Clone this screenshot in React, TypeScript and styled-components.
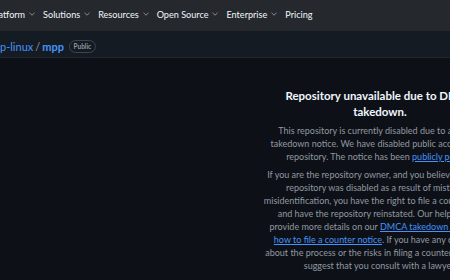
import React from "react";
import styled, { createGlobalStyle } from "styled-components";

const GlobalStyle = createGlobalStyle`
  html, body {
    margin: 0;
    padding: 0;
    background: #0d1117;
    overflow: hidden;
  }
  body {
    font-family: "Lato", "Liberation Sans", sans-serif;
  }
`;

const Page = styled.div`
  width: 760px;
  height: 280px;
  display: flex;
  flex-direction: column;
  background: #0d1117;
`;

const Header = styled.header`
  height: 31px;
  box-sizing: border-box;
  padding-bottom: 3px;
  background: #25292e;
  display: flex;
  align-items: center;
`;

const Nav = styled.nav`
  display: flex;
  align-items: center;
  gap: 8px;
  margin-left: -9px;
`;

const NavItem = styled.span`
  display: flex;
  align-items: center;
  gap: 4px;
  color: #f0f6fc;
  font-size: 9.1px;
  white-space: nowrap;
`;

const Chevron = () => (
  <svg width="6" height="4" viewBox="0 0 6 4" fill="none">
    <path d="M0.5 0.8 L3 3.2 L5.5 0.8" stroke="#9198a1" strokeWidth="0.9" />
  </svg>
);

const RepoBar = styled.div`
  height: 27px;
  box-sizing: border-box;
  padding-top: 5px;
  background: #151b23;
  border-bottom: 1px solid #21262d;
  display: flex;
  align-items: center;
  gap: 5px;
`;

const Crumbs = styled.div`
  display: flex;
  align-items: center;
  gap: 2px;
  font-size: 11px;
  color: #4493f8;
  white-space: nowrap;
`;

const Slash = styled.span`
  color: #9198a1;
`;

const RepoName = styled.span`
  font-weight: 700;
`;

const Badge = styled.span`
  border: 1px solid #3d444d;
  border-radius: 8px;
  color: #9198a1;
  font-size: 6.5px;
  font-weight: 700;
  padding: 1px 3.5px;
  line-height: 9px;
`;

const Main = styled.main`
  flex: 1;
  display: flex;
  justify-content: center;
  padding-top: 30px;
`;

const Blankslate = styled.section`
  text-align: center;
  white-space: nowrap;
`;

const Title = styled.h3`
  margin: 0 0 4px;
  color: #f0f6fc;
  font-size: 11.5px;
  font-weight: 700;
  line-height: 16px;
`;

const Para = styled.p`
  margin: 0 0 5px;
  color: #9198a1;
  font-size: 9px;
  line-height: 13px;
`;

const Link = styled.a`
  color: #4493f8;
  text-decoration: underline;
`;

const navItems = ["Platform", "Solutions", "Resources", "Open Source", "Enterprise"];

const App = () => {
  return (
    <>
      <GlobalStyle />
      <Page>
        <Header>
          <Nav>
            {navItems.map((item) => (
              <NavItem key={item}>
                {item}
                <Chevron />
              </NavItem>
            ))}
            <NavItem>Pricing</NavItem>
          </Nav>
        </Header>
        <RepoBar>
          <Crumbs>
            <span>p-linux</span>
            <Slash>/</Slash>
            <RepoName>mpp</RepoName>
          </Crumbs>
          <Badge>Public</Badge>
        </RepoBar>
        <Main>
          <Blankslate>
            <Title>
              Repository unavailable due to DMCA
              <br />
              takedown.
            </Title>
            <Para>
              This repository is currently disabled due to a DMCA
              <br />
              takedown notice. We have disabled public access to the
              <br />
              repository. The notice has been <Link href="#">publicly posted</Link>.
            </Para>
            <Para>
              If you are the repository owner, and you believe that your
              <br />
              repository was disabled as a result of mistake or
              <br />
              misidentification, you have the right to file a counter notice
              <br />
              and have the repository reinstated. Our help articles
              <br />
              provide more details on our <Link href="#">DMCA takedown policy</Link> and
              <br />
              <Link href="#">how to file a counter notice</Link>. If you have any questions
              <br />
              about the process or the risks in filing a counter notice, we
              <br />
              suggest that you consult with a lawyer.
            </Para>
          </Blankslate>
        </Main>
      </Page>
    </>
  );
};

export default App;
